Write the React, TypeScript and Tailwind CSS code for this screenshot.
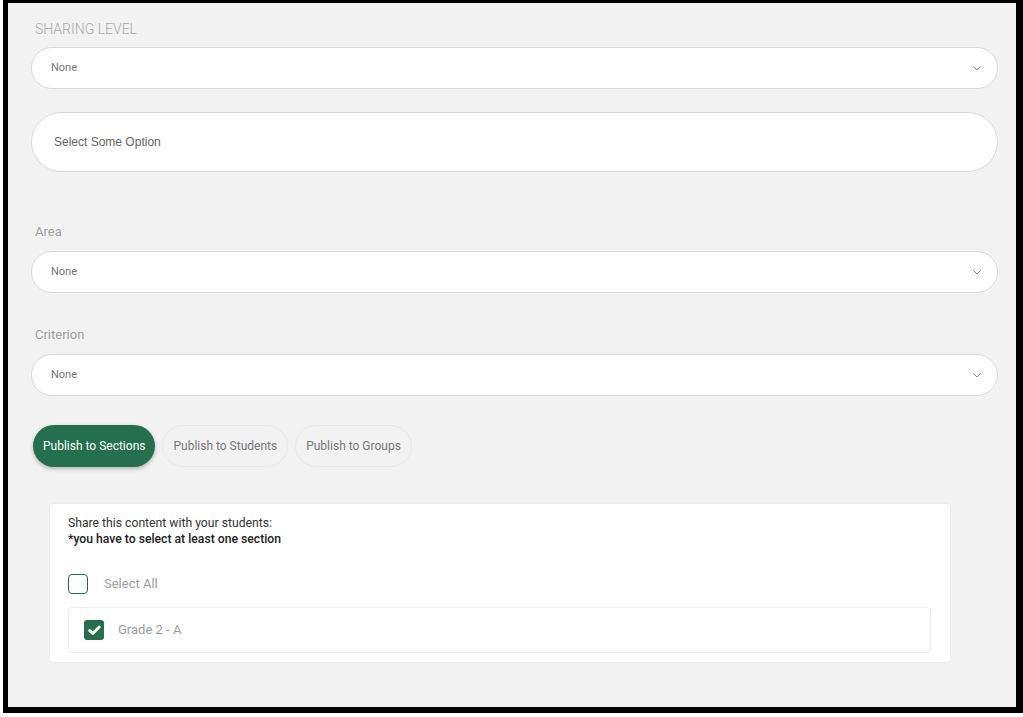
import React from "react";

const GREEN = "bg-[#246f4e]";

function Chevron() {
  return (
    <svg width="8" height="5" viewBox="0 0 8 5" fill="none" stroke="#8a8a8a" strokeWidth={1}>
      <path d="M0.7 0.7 L4 4 L7.3 0.7" strokeLinecap="round" strokeLinejoin="round" />
    </svg>
  );
}

function SelectBox({ value }: { value: string }) {
  return (
    <div className="h-[42px] rounded-full border border-[#d9d9d9] bg-white flex items-center justify-between pl-[19px] pr-[16px]">
      <span className="text-[11px] text-[#757575]">{value}</span>
      <Chevron />
    </div>
  );
}

function Label({ children, className = "" }: { children: React.ReactNode; className?: string }) {
  return <div className={`ml-[4px] leading-[18px] text-[#9e9e9e] ${className}`}>{children}</div>;
}

function CheckBox({ checked }: { checked: boolean }) {
  if (checked) {
    return (
      <div className={`w-[20px] h-[20px] rounded-[3px] ${GREEN} flex items-center justify-center`}>
        <svg width="13" height="11" viewBox="0 0 13 11" fill="none" stroke="white" strokeWidth={3}>
          <path d="M1.8 5.6 L4.8 8.5 L11.2 2" strokeLinecap="round" strokeLinejoin="round" />
        </svg>
      </div>
    );
  }
  return <div className="w-[20px] h-[20px] rounded-[4px] border-[1.5px] border-[#246f4e] bg-white" />;
}

export default function App() {
  return (
    <div className="w-[1023px] h-[717px] bg-white overflow-hidden" style={{ fontFamily: "Roboto, 'Liberation Sans', sans-serif" }}>
      <div className="ml-[3px] h-[713px] border-t-[3px] border-l-[5px] border-r-[7px] border-b-[6px] border-black bg-[#f2f2f2] pl-[23px] pr-[18px] pt-[17px]">
        <Label className="uppercase text-[14px] font-light text-[#a8a8a8]">Sharing Level</Label>
        <div className="mt-[9px]">
          <SelectBox value="None" />
        </div>

        <div className="mt-[23px] h-[60px] rounded-[30px] border border-[#d9d9d9] bg-white flex items-center pl-[22px]">
          <span className="text-[12px] text-[#666]" style={{ fontFamily: "'Liberation Sans', Arial, sans-serif" }}>
            Select Some Option
          </span>
        </div>

        <Label className="mt-[51px] text-[13px]">Area</Label>
        <div className="mt-[10px]">
          <SelectBox value="None" />
        </div>

        <Label className="mt-[33px] text-[13px]">Criterion</Label>
        <div className="mt-[10px]">
          <SelectBox value="None" />
        </div>

        <div className="mt-[29px] flex gap-[7px] pl-[2px]">
          <button className={`h-[42px] px-[10px] rounded-full ${GREEN} text-white text-[12px] shadow-[0_2px_4px_rgba(0,0,0,0.25)]`}>
            Publish to Sections
          </button>
          <button className="h-[42px] px-[10px] rounded-full border border-[#e8e8e8] text-[#777] text-[12px]">
            Publish to Students
          </button>
          <button className="h-[42px] px-[10px] rounded-full border border-[#e8e8e8] text-[#777] text-[12px]">
            Publish to Groups
          </button>
        </div>

        <div className="mt-[36px] ml-[18px] mr-[47px] bg-white rounded-[4px] border border-[#ececec] pl-[18px] pr-[19px] pt-[11px] pb-[9px]">
          <div className="text-[12.2px] leading-[16px] text-[#333]">Share this content with your students:</div>
          <div className="text-[12.2px] leading-[16px] text-[#222] font-medium">*you have to select at least one section</div>

          <div className="mt-[27px] flex items-center">
            <CheckBox checked={false} />
            <span className="ml-[16px] text-[13px] text-[#9e9e9e]">Select All</span>
          </div>

          <div className="mt-[13px] h-[46px] rounded-[4px] border border-[#ececec] flex items-center pl-[15px]">
            <CheckBox checked />
            <span className="ml-[14px] text-[13px] text-[#9e9e9e]">Grade 2 - A</span>
          </div>
        </div>
      </div>
    </div>
  );
}
